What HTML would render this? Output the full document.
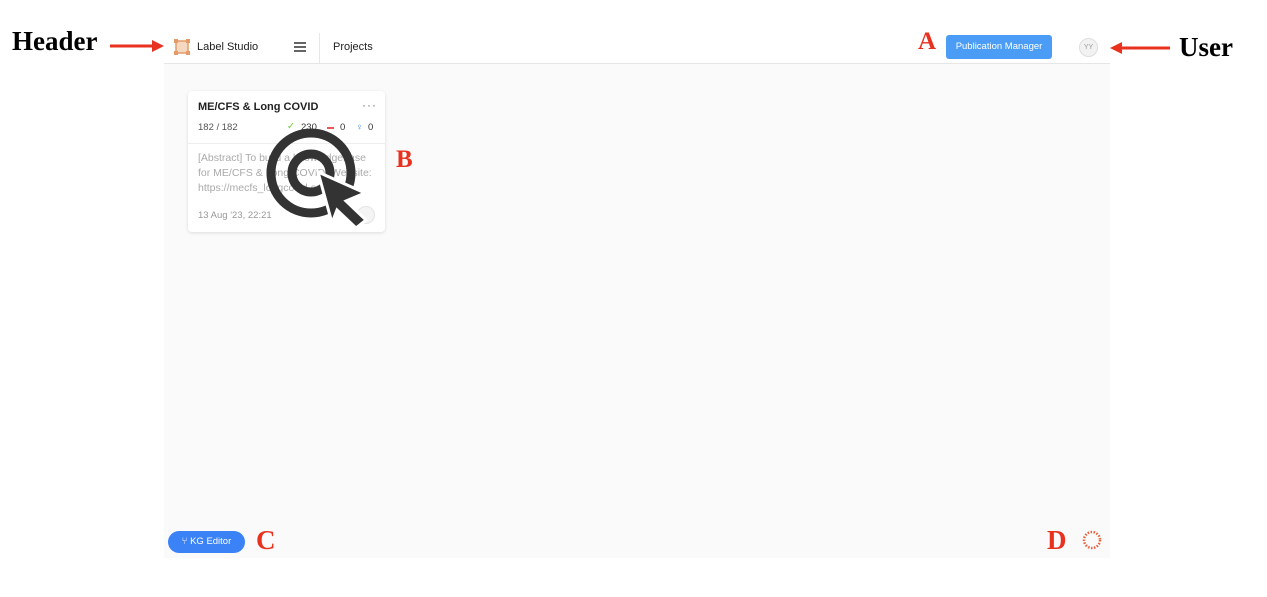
<!DOCTYPE html>
<html><head><meta charset="utf-8"><style>
body{margin:0;width:1267px;height:597px;background:#fff;position:relative;font-family:"Liberation Sans",sans-serif;overflow:hidden}
.a{position:absolute}
.ann{font-family:"Liberation Serif",serif;font-weight:bold;position:absolute}
</style></head><body>
<div class="a" style="left:164px;top:63px;width:946px;height:495px;background:#fafafa"></div>
<div class="a" style="left:164px;top:63px;width:946px;height:1px;background:#e6e6e6"></div>
<div class="a" style="left:319px;top:33px;width:1px;height:30px;background:#e6e6e6"></div>
<div class="ann" style="left:12px;top:26px;font-size:27px;color:#000">Header</div>
<svg class="a" style="left:108px;top:38px" width="58" height="16"><line x1="2" y1="8" x2="46" y2="8" stroke="#e8321f" stroke-width="3"/><polygon points="44,2 56,8 44,14" fill="#e8321f"/></svg>
<svg class="a" style="left:173px;top:38px" width="18" height="18"><rect x="3" y="3" width="12" height="12" fill="#f5d8c0" stroke="#e59a6a" stroke-width="1.5"/><rect x="1" y="1" width="4" height="4" fill="#e59a6a"/><rect x="13" y="1" width="4" height="4" fill="#e59a6a"/><rect x="1" y="13" width="4" height="4" fill="#e59a6a"/><rect x="13" y="13" width="4" height="4" fill="#e59a6a"/></svg>
<div class="a" style="left:197px;top:41px;font-size:11px;color:#222">Label Studio</div>
<svg class="a" style="left:293px;top:41px" width="14" height="12"><path d="M1 2H13M1 6H13M1 10H13" stroke="#333" stroke-width="1.6"/></svg>
<div class="a" style="left:333px;top:41px;font-size:11px;color:#222">Projects</div>
<div class="ann" style="left:918px;top:28px;font-size:25px;color:#e8321f">A</div>
<div class="a" style="left:946px;top:35px;width:106px;height:24px;background:#4a9cf5;border-radius:3px;color:#fff;font-size:9.5px;line-height:24px;text-align:center">Publication Manager</div>
<div class="a" style="left:1079px;top:38px;width:17px;height:17px;border-radius:50%;background:#f2f2f2;border:1px solid #ddd;font-size:7px;color:#999;text-align:center;line-height:17px">YY</div>
<svg class="a" style="left:1110px;top:40px" width="62" height="16"><polygon points="12,2 0,8 12,14" fill="#e8321f"/><line x1="10" y1="8" x2="60" y2="8" stroke="#e8321f" stroke-width="3"/></svg>
<div class="ann" style="left:1179px;top:32px;font-size:27px;color:#000">User</div>
<div class="a" style="left:188px;top:91px;width:197px;height:141px;background:#fff;border-radius:4px;box-shadow:0 1px 3px rgba(0,0,0,.12)"></div>
<div class="a" style="left:198px;top:101px;font-size:11px;font-weight:bold;color:#222">ME/CFS &amp; Long COVID</div>
<div class="a" style="left:362px;top:98px;font-size:12px;color:#777;letter-spacing:1px">···</div>
<div class="a" style="left:198px;top:122px;font-size:9.5px;color:#555">182 / 182</div>
<div class="a" style="left:287px;top:121px;font-size:9.5px;color:#6c3">✓</div>
<div class="a" style="left:301px;top:122px;font-size:9.5px;color:#333">230</div>
<div class="a" style="left:327px;top:127px;width:7px;height:2px;background:#e55"></div>
<div class="a" style="left:340px;top:122px;font-size:9.5px;color:#333">0</div>
<div class="a" style="left:356px;top:122px;font-size:9.5px;color:#48f">♀</div>
<div class="a" style="left:368px;top:122px;font-size:9.5px;color:#333">0</div>
<div class="a" style="left:188px;top:143px;width:197px;height:1px;background:#eee"></div>
<div class="a" style="left:198px;top:151px;width:180px;font-size:10.5px;line-height:15px;color:#aaa">[Abstract] To build a knowledgebase for ME/CFS &amp; Long COVID. Website: https://mecfs_longcovid.org/info...</div>
<div class="a" style="left:198px;top:210px;font-size:9.5px;color:#999">13 Aug '23, 22:21</div>
<div class="a" style="left:357px;top:206px;width:16px;height:16px;border-radius:50%;background:#f4f4f4;border:1px solid #e4e4e4"></div>
<svg class="a" style="left:260px;top:120px" width="120" height="110"><circle cx="51" cy="53" r="40" fill="none" stroke="#333" stroke-width="9"/><circle cx="51" cy="53" r="19" fill="none" stroke="#333" stroke-width="9"/><path d="M58 52L105 73L86 81L106 100L96 108L77 90L72 103Z" fill="#333" stroke="#fff" stroke-width="3"/></svg>
<div class="ann" style="left:396px;top:146px;font-size:25px;color:#e8321f">B</div>
<div class="a" style="left:168px;top:531px;width:77px;height:22px;background:#3b82f6;border-radius:11px;color:#fff;font-size:9.5px;line-height:22px;text-align:center">⑂ KG Editor</div>
<div class="ann" style="left:256px;top:525px;font-size:27px;color:#e8321f">C</div>
<div class="ann" style="left:1047px;top:525px;font-size:27px;color:#e8321f">D</div>
<svg class="a" style="left:1081px;top:529px" width="22" height="22"><circle cx="11" cy="11" r="8" fill="none" stroke="#e8603a" stroke-width="2.5" stroke-dasharray="1.5 1.5"/></svg>
</body></html>
